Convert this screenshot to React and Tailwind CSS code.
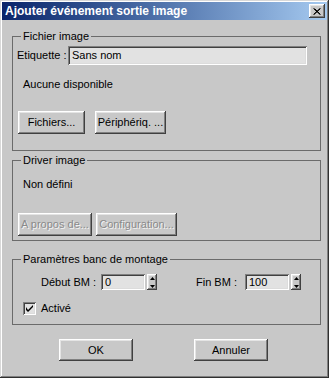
const raised =
  "bg-[#c8c8c8] shadow-[inset_-1px_-1px_#404040,inset_1px_1px_#ffffff,inset_-2px_-2px_#808080,inset_2px_2px_#e4e4e4]";
const sunken =
  "bg-[#e2e2e2] shadow-[inset_1px_1px_#808080,inset_-1px_-1px_#ffffff,inset_2px_2px_#404040,inset_-2px_-2px_#dcdcdc]";

const Button = ({ children, w, disabled }) => (
  <div
    className={`${raised} ${w} h-[23px] flex items-center justify-center ${
      disabled ? "text-[#8a8a8a] [text-shadow:1px_1px_0_#f4f4f4]" : "text-black"
    }`}
  >
    {children}
  </div>
);

const Spinner = () => (
  <div className={`${raised} w-[10px] h-[16px] flex flex-col`}>
    <div className="h-[8px] flex items-center justify-center">
      <svg width="5" height="3" viewBox="0 0 5 3">
        <path d="M2.5 0 L5 3 L0 3 Z" fill="#000" />
      </svg>
    </div>
    <div className="h-[8px] flex items-center justify-center">
      <svg width="5" height="3" viewBox="0 0 5 3">
        <path d="M0 0 L5 0 L2.5 3 Z" fill="#000" />
      </svg>
    </div>
  </div>
);

const Group = ({ title, className, children }) => (
  <fieldset className={`border border-[#6b6b6b] w-[309px] ml-[10px] p-0 ${className}`}>
    <legend className="ml-[8px] px-[2px] leading-[13px]">{title}</legend>
    {children}
  </fieldset>
);

export default function App() {
  return (
    <div className="w-[329px] h-[378px] bg-[#c8c8c8] p-[2px] flex flex-col text-[11px] leading-[13px] text-black font-['Liberation_Sans',Arial,sans-serif] shadow-[inset_-1px_-1px_#303030,inset_1px_1px_#d8d8d8,inset_-2px_-2px_#808080,inset_2px_2px_#ffffff]">
      <div className="h-[18px] flex items-center justify-between pl-[3px] pr-[2px] bg-gradient-to-r from-[#0a246a] to-[#a6caf0]">
        <span className="text-white font-bold text-[12px]">Ajouter événement sortie image</span>
        <div className={`${raised} w-[16px] h-[14px] flex items-center justify-center`}>
          <svg width="8" height="7" viewBox="0 0 8 7">
            <path d="M0.5 0.5 L7 6.5 M1.5 0.5 L7.5 6.5 M7 0.5 L0.5 6.5 M7.5 0.5 L1 6.5" stroke="#000" strokeWidth="1" />
          </svg>
        </div>
      </div>

      <Group title="Fichier image" className="mt-[10px] pb-[16px]">
        <div className="mt-[3px] flex items-center ml-[4px]">
          <span className="w-[51px]">Etiquette :</span>
          <div className={`${sunken} w-[239px] h-[19px] flex items-center pl-[4px]`}>Sans nom</div>
        </div>
        <div className="mt-[13px] ml-[10px]">Aucune disponible</div>
        <div className="mt-[20px] ml-[5px] flex gap-[10px]">
          <Button w="w-[67px]">Fichiers...</Button>
          <Button w="w-[71px]">Périphériq. ...</Button>
        </div>
      </Group>

      <Group title="Driver image" className="mt-[3px] pb-[4px]">
        <div className="mt-[11px] ml-[10px]">Non défini</div>
        <div className="mt-[22px] ml-[5px] flex gap-[4px]">
          <Button w="w-[74px]" disabled>A propos de...</Button>
          <Button w="w-[81px]" disabled>Configuration...</Button>
        </div>
      </Group>

      <Group title="Paramètres banc de montage" className="mt-[12px] pb-[9px]">
        <div className="mt-[8px] ml-[28px] flex items-center">
          <span className="w-[60px]">Début BM :</span>
          <div className={`${sunken} w-[44px] h-[16px] flex items-center pl-[4px]`}>0</div>
          <div className="ml-[2px]">
            <Spinner />
          </div>
          <span className="ml-[39px] w-[49px]">Fin BM :</span>
          <div className={`${sunken} w-[44px] h-[16px] flex items-center pl-[4px]`}>100</div>
          <div className="ml-[2px]">
            <Spinner />
          </div>
        </div>
        <div className="mt-[12px] ml-[10px] flex items-center">
          <div className={`${sunken} w-[13px] h-[13px] flex items-center justify-center`}>
            <svg width="7" height="7" viewBox="0 0 7 7">
              <path d="M0 2 L0 5 L2 7 L7 2 L7 0 L2 5 Z" fill="#000" />
            </svg>
          </div>
          <span className="ml-[5px]">Activé</span>
        </div>
      </Group>

      <div className="mt-[14px] pl-[57px] flex gap-[61px]">
        <div className={`${raised} w-[74px] h-[22px] flex items-center justify-center`}>OK</div>
        <div className={`${raised} w-[74px] h-[22px] flex items-center justify-center`}>Annuler</div>
      </div>
    </div>
  );
}
